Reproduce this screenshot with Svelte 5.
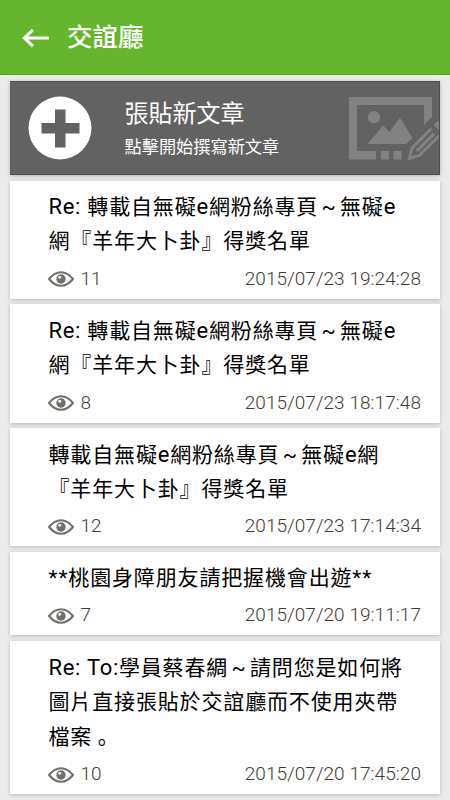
<script lang="ts">
  interface Post {
    lines: string[];
    views: number;
    date: string;
  }

  const posts: Post[] = [
    {
      lines: ['Re: 轉載自無礙e網粉絲專頁~無礙e', '網『羊年大卜卦』得獎名單'],
      views: 11,
      date: '2015/07/23 19:24:28',
    },
    {
      lines: ['Re: 轉載自無礙e網粉絲專頁~無礙e', '網『羊年大卜卦』得獎名單'],
      views: 8,
      date: '2015/07/23 18:17:48',
    },
    {
      lines: ['轉載自無礙e網粉絲專頁~無礙e網', '『羊年大卜卦』得獎名單'],
      views: 12,
      date: '2015/07/23 17:14:34',
    },
    {
      lines: ['**桃園身障朋友請把握機會出遊**'],
      views: 7,
      date: '2015/07/20 19:11:17',
    },
    {
      lines: ['Re: To:學員蔡春綢~請問您是如何將', '圖片直接張貼於交誼廳而不使用夾帶', '檔案。'],
      views: 10,
      date: '2015/07/20 17:45:20',
    },
  ];

  // latin runs are set a little larger, and ~ and 。 take a full cell
  const splitLine = (line: string): string[] => line.split(/([~。]|[A-Za-z: ]+)/).filter((part) => part !== '');

  const partClass = (part: string): string => {
    if (part === '~') return 'tilde';
    if (part === '。') return 'stop';
    return /^[A-Za-z: ]+$/.test(part) ? 'latin' : 'han';
  };
</script>

<main>
  <header class="app-bar">
    <svg class="back" viewBox="0 0 28 20" aria-hidden="true">
      <path d="M11.3 1.5 2.5 10l8.800 8.500M3 10h25" />
    </svg>
    <h1>交誼廳</h1>
  </header>

  <div class="list">
    <div class="new-post">
      <svg class="plus" viewBox="0 0 64 64" aria-hidden="true">
        <circle cx="32" cy="32" r="31.5" fill="#fff" />
        <path d="M27 13.500h10.500v13.500h14v10.500h-14v14H27v-14H13.500V27H27z" fill="#626262" />
      </svg>
      <div class="new-post-text">
        <div class="new-post-title">張貼新文章</div>
        <div class="new-post-hint">點擊開始撰寫新文章</div>
      </div>
      <svg class="picture" viewBox="0 0 90 64" aria-hidden="true">
        <path d="M0 0h83v20l-8 8V8H8v46h19v8.500H0z" />
        <path d="M32 54h8v8.500h-8zM44.500 54h8v8.500h-8z" />
        <circle cx="25" cy="20.300" r="6.200" />
        <path d="M18.500 47 34.300 28.500l6 6.500L51 20.700 63.500 41 57 47z" />
        <path d="M82.500 31.500 63 51l-2.700 10.500 10-3L90 39" fill="none" stroke="#828282" stroke-width="3" />
        <path d="m66.500 53 17.500-17.500 2.300 2.300L69 55z" />
        <path d="m84.500 28 4-4L93 28v8z" />
      </svg>
    </div>

    {#each posts as post}
      <article class="card">
        <div class="title">
          {#each post.lines as line}
            <div class="line">{#each splitLine(line) as part}<span class={partClass(part)}>{part}</span>{/each}</div>
          {/each}
        </div>
        <div class="meta">
          <svg class="eye" viewBox="0 0 26 16" aria-hidden="true">
            <path d="M1 8Q6.500 1.200 13 1.200T25 8Q19.500 14.800 13 14.800T1 8z" fill="none" stroke="#706f69" stroke-width="2" />
            <circle cx="13" cy="8" r="4.700" fill="#706f69" />
            <circle cx="11.700" cy="6.300" r="1.500" fill="#fff" />
          </svg>
          <span class="views">{post.views}</span>
          <span class="date">{post.date}</span>
        </div>
      </article>
    {/each}
  </div>
</main>

<style>
  :global(body) {
    background: #ebebeb;
  }

  main {
    height: 800px;
    overflow: hidden;
    background: #ebebeb;
    font-family: Roboto, 'Noto Sans CJK TC', sans-serif;
    color: #000;
  }

  .app-bar {
    display: flex;
    align-items: center;
    box-sizing: border-box;
    height: 75px;
    padding-left: 22px;
    background: #66b52e;
    border-bottom: 1px solid #48aa10;
    color: #fff;
  }

  .back {
    width: 27px;
    height: 20px;
    margin-top: 2px;
    fill: none;
    stroke: #fff;
    stroke-width: 3.2;
  }

  h1 {
    margin: 0 0 0 18px;
    font-size: 25.5px;
    font-weight: 500;
    line-height: 36px;
  }

  .list {
    display: flex;
    flex-direction: column;
    gap: 5.6px;
    padding: 6px 10px 0;
  }

  .new-post {
    display: flex;
    align-items: center;
    box-sizing: border-box;
    height: 94px;
    background: #626262;
    border: 1px solid #4d4d4d;
    border-left-width: 0;
    box-shadow: 0 1px 4px rgba(0, 0, 0, 0.25);
    color: #fff;
    overflow: hidden;
  }

  .plus {
    flex: none;
    width: 64px;
    height: 64px;
    margin: 0 0 1px 17.5px;
  }

  .new-post-text {
    margin: 3px 0 0 33px;
    white-space: nowrap;
  }

  .new-post-title {
    font-size: 24px;
    line-height: 35px;
  }

  .new-post-hint {
    font-size: 17.2px;
    line-height: 30px;
  }

  .picture {
    flex: none;
    width: 90px;
    height: 64px;
    margin: 1px 0 0 auto;
    fill: #828282;
  }

  .card {
    box-sizing: border-box;
    padding: 8.8px 19px 1.4px 38.5px;
    background: #fff;
    box-shadow: 0 1px 4px rgba(0, 0, 0, 0.22);
  }

  .title {
    font-size: 21px;
    letter-spacing: 0.85px;
    white-space: nowrap;
  }

  .line {
    height: 35px;
    line-height: 35px;
    white-space: pre;
  }

  .latin {
    font-size: 22px;
    letter-spacing: 0.7px;
  }

  .tilde {
    display: inline-block;
    width: 21.8px;
    text-align: center;
  }

  .stop {
    position: relative;
    top: 6px;
    left: -1px;
  }

  .meta {
    display: flex;
    align-items: center;
    height: 38px;
    color: #403c32;
    font-size: 19px;
    font-weight: 300;
    letter-spacing: 0.05px;
  }

  .eye {
    width: 26px;
    height: 16px;
    margin: 2px 7px 0 -1px;
  }

  .date {
    margin-left: auto;
  }
</style>
